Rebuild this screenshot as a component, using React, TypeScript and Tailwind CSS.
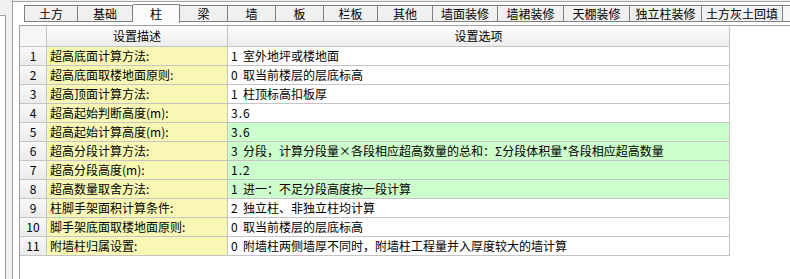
import React from 'react';

const tabs = [
  { label: '土方', w: 54 },
  { label: '基础', w: 55 },
  { label: '柱', w: 47 },
  { label: '梁', w: 48 },
  { label: '墙', w: 48 },
  { label: '板', w: 48 },
  { label: '栏板', w: 54 },
  { label: '其他', w: 55 },
  { label: '墙面装修', w: 65 },
  { label: '墙裙装修', w: 66 },
  { label: '天棚装修', w: 66 },
  { label: '独立柱装修', w: 72 },
  { label: '土方灰土回填', w: 81 },
];

// code = leading option number, text = rest of the option
const rows = [
  { desc: '超高底面计算方法:', code: '1', text: '室外地坪或楼地面', green: false },
  { desc: '超高底面取楼地面原则:', code: '0', text: '取当前楼层的层底标高', green: false },
  { desc: '超高顶面计算方法:', code: '1', text: '柱顶标高扣板厚', green: false },
  { desc: '超高起始判断高度(m):', code: '', text: '3.6', green: false },
  { desc: '超高起始计算高度(m):', code: '', text: '3.6', green: true },
  { desc: '超高分段计算方法:', code: '3', text: '分段，计算分段量×各段相应超高数量的总和：Σ分段体积量*各段相应超高数量', green: true },
  { desc: '超高分段高度(m):', code: '', text: '1.2', green: true },
  { desc: '超高数量取舍方法:', code: '1', text: '进一：不足分段高度按一段计算', green: true },
  { desc: '柱脚手架面积计算条件:', code: '2', text: '独立柱、非独立柱均计算', green: false },
  { desc: '脚手架底面取楼地面原则:', code: '0', text: '取当前楼层的层底标高', green: false },
  { desc: '附墙柱归属设置:', code: '0', text: '附墙柱两侧墙厚不同时，附墙柱工程量并入厚度较大的墙计算', green: false },
];

export default function App() {
  return (
    <div
      className="w-[790px] h-[279px] flex overflow-hidden bg-white text-[12px] text-black leading-none"
      style={{ fontFamily: '"Noto Sans CJK SC", "Liberation Sans", sans-serif' }}
    >
      {/* left frame strips */}
      <div className="w-[6px] flex flex-col shrink-0">
        <div className="h-[15px] bg-[#f0f0f0]" />
        <div className="flex-1 bg-white border-t border-r border-[#a0a0a0]" />
      </div>
      <div className="w-[7px] shrink-0 bg-[#f0f0f0] border-r border-[#a0a0a0]" />

      {/* main panel */}
      <div className="flex-1 flex flex-col bg-[#f0f0f0] pt-px">
        <div className="flex-1 flex flex-col bg-white border-t border-[#a0a0a0]">
          {/* tab bar */}
          <div className="h-[23px] pl-[11px] pt-[3px] flex items-start">
            {tabs.map((t, i) => {
              const active = t.label === '柱';
              return (
                <div
                  key={t.label}
                  className={
                    active
                      ? 'h-[19px] -mt-[1px] flex items-center justify-center bg-[#fbfbfb] border-t border-r border-[#808080] shrink-0'
                      : `h-[17px] flex items-center justify-center bg-[#f0f0f0] border-t border-b border-r border-[#808080] shrink-0 ${i === 0 ? 'border-l' : ''}`
                  }
                  style={{ width: t.w }}
                >
                  {t.label}
                </div>
              );
            })}
            <div className="h-[17px] w-[40px] shrink-0 bg-[#f7f7f7] border-t border-b border-[#808080]" />
          </div>

          {/* grid area */}
          <div className="flex-1 ml-[6px] border-t border-l border-[#a0a0a0] bg-white">
            <div className="w-[710px] border-r border-[#c4c4c4]">
              <div className="flex h-[21px] border-b border-[#c4c4c4] bg-gradient-to-b from-[#fdfdfd] to-[#ececec]">
                <div className="w-[27px] border-r border-[#c4c4c4] bg-[#f6f6f6]" />
                <div className="w-[181px] border-r border-[#c4c4c4] flex items-center justify-center">设置描述</div>
                <div className="flex-1 flex items-center justify-center">设置选项</div>
              </div>
              {rows.map((r, i) => (
                <div key={i} className="flex h-[19px] border-b border-[#c4c4c4]">
                  <div className="w-[27px] border-r border-[#c4c4c4] bg-gradient-to-b from-[#f8f8f8] to-[#ebebeb] flex items-center justify-center">
                    {i + 1}
                  </div>
                  <div className="w-[181px] border-r border-[#c4c4c4] bg-[#f8f8b4] flex items-center pl-[3px] whitespace-nowrap">
                    {r.desc}
                  </div>
                  <div
                    className={`flex-1 flex items-center pl-[3px] whitespace-nowrap overflow-hidden ${r.green ? 'bg-[#ccffcc]' : 'bg-white'}`}
                  >
                    {r.code && <span className="w-[12px] shrink-0">{r.code}</span>}
                    <span className={r.code ? '' : 'tracking-[1px]'}>{r.text}</span>
                  </div>
                </div>
              ))}
            </div>
          </div>
        </div>
      </div>
    </div>
  );
}
